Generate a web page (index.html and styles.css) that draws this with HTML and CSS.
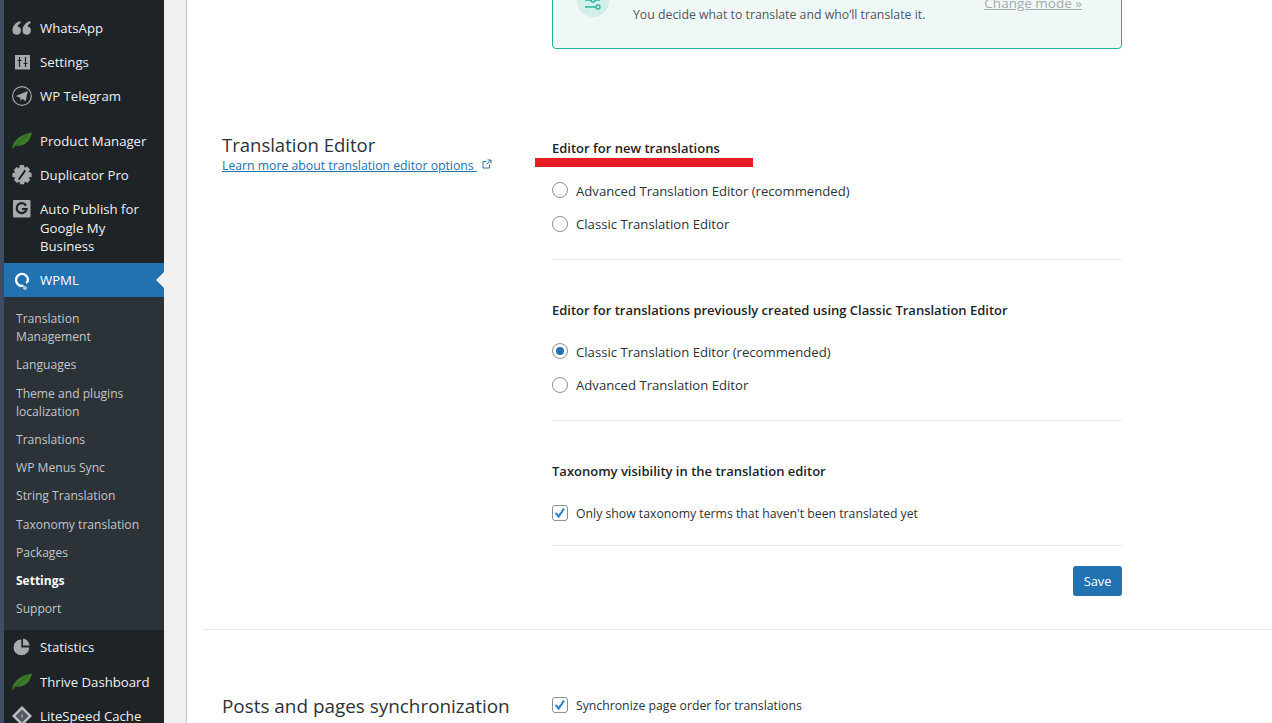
FILE: index.html
```html
<!DOCTYPE html>
<html lang="en">
<head>
<meta charset="utf-8">
<title>WPML Settings</title>
<link rel="stylesheet" href="styles.css">
</head>
<body>
<div class="admin">
  <aside class="sidebar">
    <ul class="menu">
      <li class="item"><span class="icon"><svg viewBox="0 0 20 20"><circle cx="5" cy="11" r="5" fill="#a7aaad"/></svg></span></li>
      <li class="item"><span class="icon"><svg viewBox="0 0 20 20"><path fill="#a7aaad" d="M8 3C3.500 4.500 .5 8 .5 12.500A4.200 4.200 0 1 0 5.500 8.400C6 7 7 6 8.800 5ZM18 3C13.500 4.500 10.500 8 10.500 12.500A4.200 4.200 0 1 0 15.500 8.400C16 7 17 6 18.800 5Z"/></svg></span><span class="label">WhatsApp</span></li>
      <li class="item"><span class="icon"><svg viewBox="0 0 20 20"><rect x="3" y="3" width="15" height="14.500" fill="#a7aaad"/><path d="M7.500 5v10M5.500 8.500h4M13.500 5v10M11.500 11.500h4" stroke="#1d2327" stroke-width="1.200" fill="none"/></svg></span><span class="label">Settings</span></li>
      <li class="item"><span class="icon"><svg viewBox="0 0 20 20"><circle cx="10" cy="10" r="9.400" fill="none" stroke="#a7aaad" stroke-width="1.100"/><path fill="#a7aaad" d="M3.800 10 15.800 5 13.600 15.200 10.300 12.800 8.600 14.800 8.200 11.800Z"/></svg></span><span class="label">WP Telegram</span></li>
      <li class="separator"></li>
      <li class="item"><span class="icon"><svg viewBox="0 0 20 20"><path fill="#3c7a2a" d="M0 18.500C1 9 8 3.500 20 1.500 18 11 12 16 3.500 14.500 2.500 15.500 1.500 17 0 18.500Z"/><path d="M2 17C6 11 10 8 16 4.500" stroke="#1f4d18" stroke-width=".6" fill="none"/></svg></span><span class="label">Product Manager</span></li>
      <li class="item"><span class="icon"><svg viewBox="0 0 20 20"><path fill="#a7aaad" fill-rule="evenodd" d="M8 0h4l.6 2.800 2.400-1.400 3 3-1.500 2.400L19.600 8v4l-2.800.6 1.400 2.400-3 3-2.400-1.500-.8 2.800H8l-.6-2.800-2.400 1.500-3-3 1.400-2.400L.4 12V8l2.800-.6-1.500-2.400 3-3L7 3.400ZM12.600 4.500 6 14l1.500 1.300L14 6Z"/></svg></span><span class="label">Duplicator Pro</span></li>
      <li class="item item-multi"><span class="icon"><svg viewBox="0 0 20 20"><rect x="1" y="1" width="17.500" height="17.500" rx="1" fill="#a7aaad"/><path d="M14 6.600A5 5 0 1 0 14.600 10H10" fill="none" stroke="#1d2327" stroke-width="2.200"/></svg></span><span class="label">Auto Publish for Google My Business</span></li>
      <li class="item item-current"><span class="icon"><svg viewBox="0 0 20 20"><path d="M11.500 15.700A6 6 0 1 1 16 10C16 11.300 15.300 12.300 14 12.800" fill="none" stroke="#fff" stroke-width="2.400"/><circle cx="13" cy="18" r="1.300" fill="none" stroke="#fff"/></svg></span><span class="label">WPML</span></li>
      <li>
        <ul class="submenu">
          <li>Translation Management</li>
          <li>Languages</li>
          <li>Theme and plugins localization</li>
          <li>Translations</li>
          <li>WP Menus Sync</li>
          <li>String Translation</li>
          <li>Taxonomy translation</li>
          <li>Packages</li>
          <li class="sub-current">Settings</li>
          <li>Support</li>
        </ul>
      </li>
      <li class="item item-tall"><span class="icon"><svg viewBox="0 0 20 20"><path fill="#a7aaad" d="M9.300 2.500V10.500H17.300A7.900 7.900 0 1 1 9.300 2.500Z"/><path fill="#a7aaad" d="M11 1.500A7.500 7.500 0 0 1 17.500 8.500H11Z"/></svg></span><span class="label">Statistics</span></li>
      <li class="item"><span class="icon"><svg viewBox="0 0 20 20"><path fill="#3c7a2a" d="M0 18.500C1 9 8 3.500 20 1.500 18 11 12 16 3.500 14.500 2.500 15.500 1.500 17 0 18.500Z"/><path d="M2 17C6 11 10 8 16 4.500" stroke="#1f4d18" stroke-width=".6" fill="none"/></svg></span><span class="label">Thrive Dashboard</span></li>
      <li class="item"><span class="icon"><svg viewBox="0 0 20 20"><path fill="#b9bcc0" d="M10 0 20 10 10 20 0 10Z"/><path fill="#50575e" d="M10 3.500 16.500 10 10 16.500 3.500 10Z"/><path fill="#a7aaad" d="M10.500 6.500 8.500 10.500H10L9.500 13.500 11.500 9.500H10Z"/></svg></span><span class="label">LiteSpeed Cache</span></li>
    </ul>
  </aside>

  <main class="content">
    <section class="mode-row">
      <div class="mode-box">
        <span class="mode-icon"><svg viewBox="0 0 32 32"><path d="M8 15h15M8 22h15" stroke="#2bb5a0" stroke-width="1.400" fill="none"/><circle cx="16" cy="15" r="2" fill="#d3efea" stroke="#2bb5a0" stroke-width="1.400"/><circle cx="21" cy="22" r="2" fill="#d3efea" stroke="#2bb5a0" stroke-width="1.400"/></svg></span>
        <p class="mode-text">You decide what to translate and who’ll translate it.</p>
        <a class="mode-link" href="#">Change mode »</a>
      </div>
    </section>

    <section class="settings settings-editor">
      <div class="settings-side">
        <h2>Translation Editor</h2>
        <a class="side-link" href="#">Learn more about translation editor options&nbsp;</a>
        <svg class="ext" viewBox="0 0 10 10"><path d="M7.500 5.500V9H1V2.500H4.500M5.500 1H9V4.500M9 1 4.500 5.500" fill="none" stroke="#2271b1" stroke-width="1"/></svg>
      </div>
      <div class="settings-main">
        <div class="group">
          <h3>Editor for new translations<span class="scribble"></span></h3>
          <label class="option"><span class="radio"></span>Advanced Translation Editor (recommended)</label>
          <label class="option"><span class="radio"></span>Classic Translation Editor</label>
        </div>
        <div class="group">
          <h3>Editor for translations previously created using Classic Translation Editor</h3>
          <label class="option"><span class="radio radio-on"></span>Classic Translation Editor (recommended)</label>
          <label class="option"><span class="radio"></span>Advanced Translation Editor</label>
        </div>
        <div class="group group-check">
          <h3>Taxonomy visibility in the translation editor</h3>
          <label class="option option-check"><span class="check"><svg viewBox="0 0 16 16"><path d="M3 8 6.500 12 12.500 3" fill="none" stroke="#2f80c8" stroke-width="2.400"/></svg></span>Only show taxonomy terms that haven't been translated yet</label>
        </div>
        <div class="actions"><button class="save" type="button">Save</button></div>
      </div>
    </section>

    <section class="settings settings-sync">
      <div class="settings-side"><h2>Posts and pages synchronization</h2></div>
      <div class="settings-main">
        <label class="option option-check"><span class="check"><svg viewBox="0 0 16 16"><path d="M3 8 6.500 12 12.500 3" fill="none" stroke="#2f80c8" stroke-width="2.400"/></svg></span>Synchronize page order for translations</label>
      </div>
    </section>
  </main>
</div>
</body>
</html>
```

FILE: styles.css
```css
* { box-sizing: border-box; }
html, body { margin: 0; height: 100%; overflow: hidden; }
body {
  background: #f0f0f1;
  color: #2c3338;
  font-family: "Open Sans", "Noto Sans", sans-serif;
  font-size: 13px;
}
ul { list-style: none; margin: 0; padding: 0; }

.admin { display: flex; height: 723px; overflow: hidden; }

.sidebar {
  flex: 0 0 164px;
  background: #1d2327;
  border-left: 4px solid #3f4d63;
  overflow: hidden;
}
.menu { margin-top: -23px; }
.item {
  display: flex;
  align-items: flex-start;
  gap: 8px;
  padding: 8px;
  min-height: 34px;
  color: #f0f0f1;
  font-size: 13.200px;
  line-height: 18px;
  position: relative;
}
.item-multi { line-height: 18.500px; padding-bottom: 7.500px; }
.item-tall { padding-bottom: 9px; }
.icon { flex: 0 0 20px; height: 20px; display: block; margin: -1px 0; }
.icon svg { display: block; width: 20px; height: 20px; }
.label { flex: 1; min-width: 0; }
.separator { height: 11px; }
.item-current { background: #2271b1; color: #fff; }
.item-current::after {
  content: "";
  position: absolute;
  right: 0;
  top: 9px;
  border: 8px solid transparent;
  border-right-color: #f0f0f1;
  border-left-width: 0;
}
.submenu { background: #2c3338; padding: 13px 0 1.600px; }
.submenu li {
  padding: 0 12px;
  margin-bottom: 10px;
  color: #c3c4c7;
  font-size: 12.100px;
  line-height: 18.200px;
}
.submenu .sub-current { color: #fff; font-weight: 700; font-size: 12px; }

.content {
  flex: 0 0 1086px;
  margin-left: 22px;
  background: #fff;
  border-left: 1px solid #c3c4c7;
  overflow: hidden;
}
.mode-row { padding-left: 365px; }
.mode-box {
  display: flex;
  width: 570px;
  height: 120px;
  margin-top: -71px;
  padding: 56px 39px 0 24px;
  background: #eff8f7;
  border: 1px solid #1fb29a;
  border-radius: 4px;
}
.mode-icon { flex: 0 0 32px; height: 32px; margin-top: -1px; border-radius: 50%; background: #d3efea; }
.mode-icon svg { display: block; width: 32px; height: 32px; }
.mode-text { flex: 1; margin: 20px 0 0 24px; color: #50575e; font-size: 12.300px; line-height: 18px; }
.mode-link { margin-top: 7px; height: 20px; color: #a7aaad; font-size: 13.500px; line-height: 20px; }

.settings { display: grid; grid-template-columns: 330px 570px; margin-left: 15px; padding-left: 20px; border-bottom: 1px solid #e8e8e8; }
.settings-editor { padding-top: 89px; padding-bottom: 33px; }
.settings-sync { padding-top: 58px; border-bottom: 0; }
.settings-side { line-height: 1; }
h2 { margin: 6px 0 0; color: #2c3338; font-size: 18.900px; font-weight: 400; line-height: 24px; }
.settings-editor h2 { margin-top: -6px; font-size: 18.500px; line-height: 26px; }
.side-link { color: #2271b1; font-size: 12.250px; line-height: 16px; }
.ext { width: 10px; height: 10px; margin-left: 2px; vertical-align: 1px; }

h3 { position: relative; margin: 0 0 15px; color: #1d2327; font-size: 13px; font-weight: 600; line-height: 20px; }
.scribble { position: absolute; left: -17px; top: 20px; width: 218px; height: 9px; background: #e81c24; }
.group { padding-bottom: 18px; margin-bottom: 40px; border-bottom: 1px solid #e8e8e8; }
.group:nth-child(2) h3 { margin-bottom: 14px; }
.group-check { padding-bottom: 15px; margin-bottom: 20px; }
.group-check h3 { margin-bottom: 14px; }
.option { display: flex; align-items: center; gap: 8px; height: 34px; color: #2c3338; font-size: 13.150px; }
h3 + .option { padding-top: 2px; }
h3 + .option > span { margin-top: -2px; }
.group-check .option { height: 35px; }
.option-check { font-size: 12.250px; }
.radio {
  flex: 0 0 16px;
  height: 16px;
  border: 1px solid #8c8f94;
  border-radius: 50%;
  background: #fff;
}
.radio-on { position: relative; }
.radio-on::before {
  content: "";
  position: absolute;
  left: 3px;
  top: 3px;
  width: 8px;
  height: 8px;
  border-radius: 50%;
  background: #2271b1;
}
.check {
  flex: 0 0 16px;
  height: 16px;
  border: 1px solid #8c8f94;
  border-radius: 3px;
  background: #fff;
}
.check svg { display: block; width: 14px; height: 14px; }
.actions { display: flex; justify-content: flex-end; }
.save {
  width: 49px;
  height: 30px;
  padding: 0;
  border: 0;
  border-radius: 3px;
  background: #2271b1;
  color: #fff;
  font-family: inherit;
  font-size: 12.800px;
}
```
